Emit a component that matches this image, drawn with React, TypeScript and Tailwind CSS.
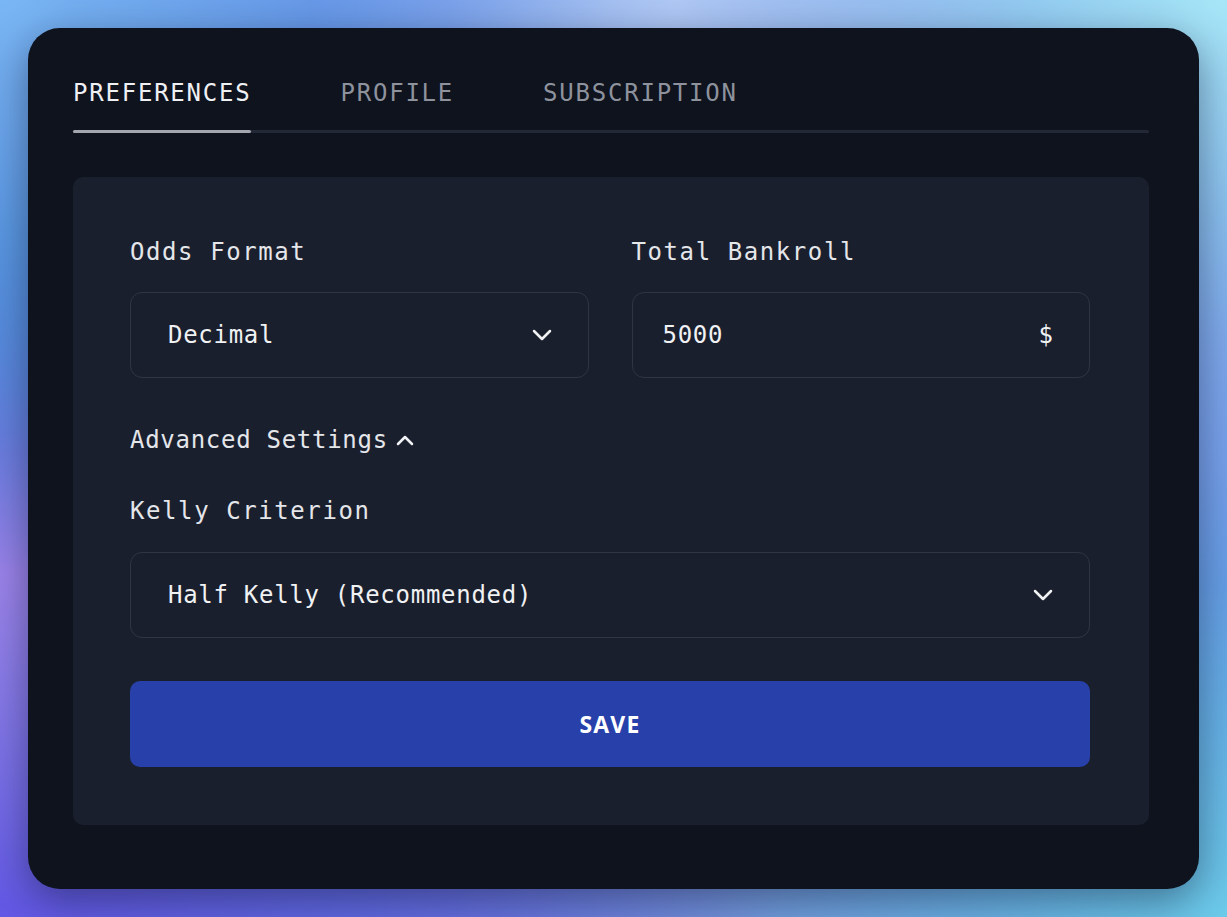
import { useState } from "react";

const tabs = ["PREFERENCES", "PROFILE", "SUBSCRIPTION"];

function ChevronDown() {
  return (
    <svg width="20" height="12" viewBox="0 0 20 12" fill="none" className="shrink-0">
      <path d="M2 2 L10 10 L18 2" stroke="#f0f1f3" strokeWidth="2.5" strokeLinecap="round" strokeLinejoin="round" />
    </svg>
  );
}

function ChevronUp() {
  return (
    <svg width="20" height="12" viewBox="0 0 20 12" fill="none" className="shrink-0">
      <path d="M3 10 L10 3 L17 10" stroke="#f0f1f3" strokeWidth="2.5" strokeLinecap="round" strokeLinejoin="round" />
    </svg>
  );
}

export default function App() {
  const [active, setActive] = useState(0);
  const [open, setOpen] = useState(true);

  return (
    <div className="min-h-screen w-full p-[28px] font-['DejaVu_Sans_Mono',monospace] bg-[#5b7fe0] bg-[radial-gradient(ellipse_at_0%_0%,#79b6f4_0%,transparent_35%),radial-gradient(ellipse_at_55%_0%,#b0c9f5_0%,transparent_38%),radial-gradient(ellipse_at_100%_0%,#a6e6f7_0%,transparent_45%),radial-gradient(ellipse_at_0%_25%,#3d7bd0_0%,transparent_35%),radial-gradient(ellipse_at_0%_63%,#9c84ea_0%,transparent_40%),radial-gradient(ellipse_at_0%_100%,#6458e6_0%,transparent_45%),radial-gradient(ellipse_at_100%_100%,#6ccbea_0%,transparent_45%),radial-gradient(ellipse_at_100%_50%,#6a7ee8_0%,transparent_40%),radial-gradient(ellipse_at_60%_100%,#7a7ed6_0%,transparent_40%)]">
      <div className="rounded-[32px] bg-[#0e131e] pl-[45px] pr-[50px] pt-[47px] pb-[64px] shadow-[0_12px_40px_rgba(10,15,40,0.45)]">
        {/* Tabs */}
        <div className="relative">
          <div className="absolute bottom-0 inset-x-0 h-[3px] rounded-full bg-[#232836]" />
          <div className="relative flex gap-[89px]">
            {tabs.map((t, i) => (
              <button
                key={t}
                onClick={() => setActive(i)}
                className="flex flex-col items-stretch"
              >
                <span
                  className={`block pb-[19px] text-[24px] leading-[36px] tracking-[0.074em] text-left ${
                    active === i ? "text-[#eef0f3]" : "text-[#8d929d]"
                  }`}
                >
                  {t}
                </span>
                <span
                  className={`block h-[3px] rounded-full ${
                    active === i ? "bg-[#a3a6ae]" : "bg-transparent"
                  }`}
                />
              </button>
            ))}
          </div>
        </div>

        {/* Panel */}
        <div className="mt-[44px] rounded-[10px] bg-[#1a1f2e] pl-[57px] pr-[59px] pt-[57px] pb-[58px]">
          <div className="grid grid-cols-2 gap-[43px]">
            <div className="flex flex-col gap-[22px]">
              <label className="text-[24px] leading-[36px] tracking-[0.066em] text-[#e4e6ea]">
                Odds Format
              </label>
              <div className="flex h-[86px] items-center justify-between rounded-[12px] border border-[#2f3545] pl-[37px] pr-[36px]">
                <span className="text-[24px] tracking-[0.03em] text-[#f0f1f3]">Decimal</span>
                <ChevronDown />
              </div>
            </div>
            <div className="flex flex-col gap-[22px]">
              <label className="text-[24px] leading-[36px] tracking-[0.066em] text-[#e4e6ea]">
                Total Bankroll
              </label>
              <div className="flex h-[86px] items-center justify-between rounded-[12px] border border-[#2f3545] pl-[30px] pr-[36px]">
                <span className="text-[24px] tracking-[0.03em] text-[#f0f1f3]">5000</span>
                <span className="text-[24px] text-[#f0f1f3]">$</span>
              </div>
            </div>
          </div>

          <button
            onClick={() => setOpen(!open)}
            className="mt-[44px] flex items-center gap-[7px] text-[24px] leading-[36px] tracking-[0.03em] text-[#e4e6ea]"
          >
            Advanced Settings
            <ChevronUp />
          </button>

          <div className="mt-[35px] flex flex-col gap-[23px]">
            <label className="text-[24px] leading-[36px] tracking-[0.066em] text-[#e4e6ea]">
              Kelly Criterion
            </label>
            <div className="flex h-[86px] items-center justify-between rounded-[12px] border border-[#2f3545] pl-[37px] pr-[36px]">
              <span className="text-[24px] tracking-[0.03em] text-[#f0f1f3]">Half Kelly (Recommended)</span>
              <ChevronDown />
            </div>
          </div>

          <button className="mt-[43px] flex h-[86px] w-full items-center justify-center rounded-[10px] bg-[#2740aa] font-['Open_Sans',sans-serif] text-[23px] font-bold tracking-[0.05em] text-white">
            SAVE
          </button>
        </div>
      </div>
    </div>
  );
}
